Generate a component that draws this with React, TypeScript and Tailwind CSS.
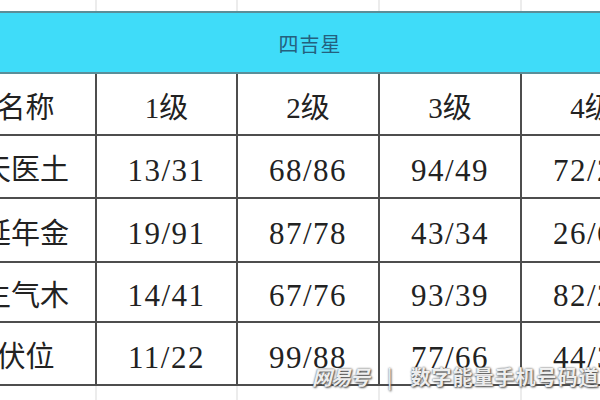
const rows = [
  { name: '天医土', vals: ['13/31', '68/86', '94/49', '72/27'], h: 'h-[63px]' },
  { name: '延年金', vals: ['19/91', '87/78', '43/34', '26/62'], h: 'h-[64px]' },
  { name: '生气木', vals: ['14/41', '67/76', '93/39', '82/28'], h: 'h-[60px]' },
  { name: '伏位', vals: ['11/22', '99/88', '77/66', '44/33'], h: 'h-[63px]' },
]

const levels = ['1级', '2级', '3级', '4级']
const widths = ['w-[141px]', 'w-[141px]', 'w-[142px]', 'w-[142px]', 'w-[142px]']

const cellFont = "font-['Liberation_Serif','Noto_Sans_CJK_SC',serif]"

function FaintStrip({ h }: { h: string }) {
  return (
    <div className={`flex ${h}`}>
      {widths.map((w, i) => (
        <div key={i} className={`${w} shrink-0 border-r-2 border-[#ececec]`} />
      ))}
    </div>
  )
}

export default function App() {
  return (
    <div className="relative w-[600px] h-[400px] overflow-hidden bg-white">
      <div className="ml-[-44px] w-[708px]">
        <FaintStrip h="h-[11px]" />

        {/* title band */}
        <div className="h-[63px] border-y-2 border-y-[#5a8e99] bg-[#3fdcf9] flex items-center justify-center">
          <span className="font-['Noto_Sans_CJK_SC',sans-serif] text-[20px] tracking-[1px] text-[#24607e] mt-[3px]">
            四吉星
          </span>
        </div>

        {/* header */}
        <div className={`flex h-[62px] border-b-2 border-[#4d4d4d] text-[29px] text-[#222] ${cellFont}`}>
          <div className={`${widths[0]} shrink-0 border-r-2 border-[#4d4d4d] flex items-center justify-center pt-[10px]`}>
            名称
          </div>
          {levels.map((l, i) => (
            <div
              key={l}
              className={`${widths[i + 1]} shrink-0 border-r-2 border-[#4d4d4d] flex items-center justify-center pt-[10px]`}
            >
              {l}
            </div>
          ))}
        </div>

        {rows.map((r) => (
          <div key={r.name} className={`flex ${r.h} border-b-2 border-[#4d4d4d] text-[29px] text-[#222] ${cellFont}`}>
            <div className={`${widths[0]} shrink-0 border-r-2 border-[#4d4d4d] flex items-center justify-center pt-[9px]`}>
              {r.name}
            </div>
            {r.vals.map((v, i) => (
              <div
                key={i}
                className={`${widths[i + 1]} shrink-0 border-r-2 border-[#4d4d4d] flex items-center justify-center pt-[9px] text-[31px] tracking-[1.5px]`}
              >
                {v}
              </div>
            ))}
          </div>
        ))}

        <FaintStrip h="h-[20px]" />
      </div>

      {/* watermark */}
      <div className="absolute left-[312px] top-[362px] flex items-center gap-[18px] font-['Noto_Sans_CJK_SC',sans-serif] text-[20px] font-bold text-white/90 [text-shadow:0_0_2px_#444,1px_1px_2px_#555] whitespace-nowrap">
        <span className="italic tracking-[-1px]">网易号</span>
        <span className="font-normal">|</span>
        <span className="tracking-[1px]">数字能量手机号码道</span>
      </div>
    </div>
  )
}
